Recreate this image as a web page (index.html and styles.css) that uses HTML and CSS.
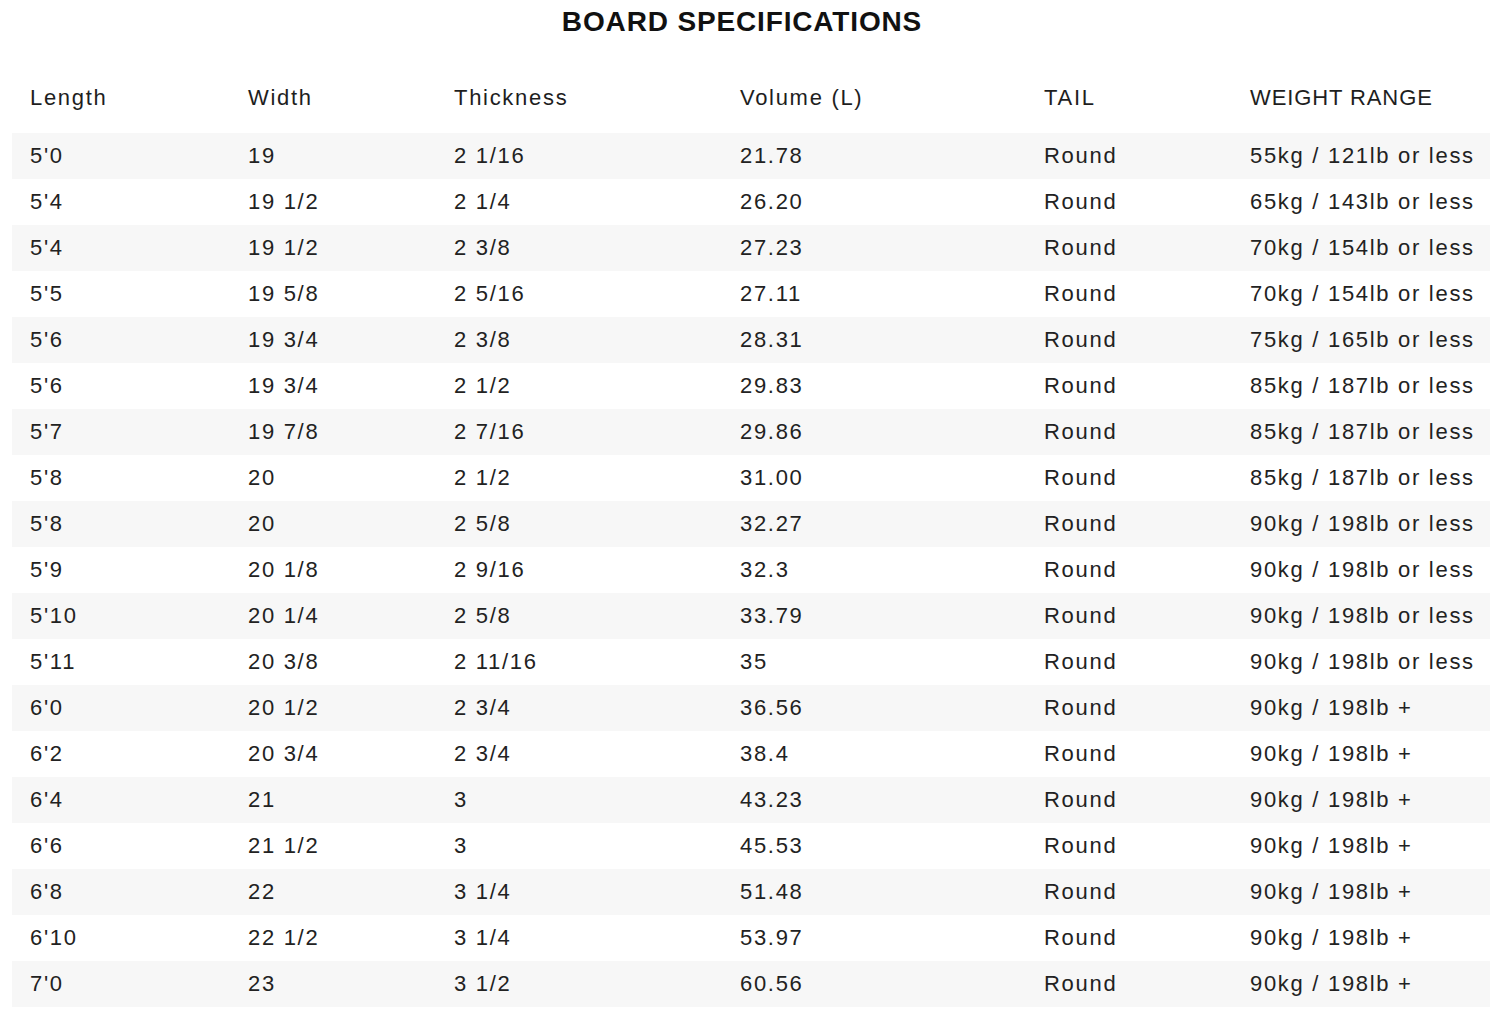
FILE: index.html
```html
<!DOCTYPE html>
<html>
<head>
<meta charset="utf-8">
<link rel="stylesheet" href="styles.css">
</head>
<body>
<div class="page">
  <h1 class="title">BOARD SPECIFICATIONS</h1>
  <table class="specs">
    <colgroup>
      <col class="c1"><col class="c2"><col class="c3"><col class="c4"><col class="c5"><col class="c6">
    </colgroup>
    <thead>
      <tr><th>Length</th><th>Width</th><th>Thickness</th><th>Volume (L)</th><th>TAIL</th><th class="caps">WEIGHT RANGE</th></tr>
    </thead>
    <tbody>
      <tr><td>5'0</td><td>19</td><td>2 1/16</td><td>21.78</td><td>Round</td><td>55kg / 121lb or less</td></tr>
      <tr><td>5'4</td><td>19 1/2</td><td>2 1/4</td><td>26.20</td><td>Round</td><td>65kg / 143lb or less</td></tr>
      <tr><td>5'4</td><td>19 1/2</td><td>2 3/8</td><td>27.23</td><td>Round</td><td>70kg / 154lb or less</td></tr>
      <tr><td>5'5</td><td>19 5/8</td><td>2 5/16</td><td>27.11</td><td>Round</td><td>70kg / 154lb or less</td></tr>
      <tr><td>5'6</td><td>19 3/4</td><td>2 3/8</td><td>28.31</td><td>Round</td><td>75kg / 165lb or less</td></tr>
      <tr><td>5'6</td><td>19 3/4</td><td>2 1/2</td><td>29.83</td><td>Round</td><td>85kg / 187lb or less</td></tr>
      <tr><td>5'7</td><td>19 7/8</td><td>2 7/16</td><td>29.86</td><td>Round</td><td>85kg / 187lb or less</td></tr>
      <tr><td>5'8</td><td>20</td><td>2 1/2</td><td>31.00</td><td>Round</td><td>85kg / 187lb or less</td></tr>
      <tr><td>5'8</td><td>20</td><td>2 5/8</td><td>32.27</td><td>Round</td><td>90kg / 198lb or less</td></tr>
      <tr><td>5'9</td><td>20 1/8</td><td>2 9/16</td><td>32.3</td><td>Round</td><td>90kg / 198lb or less</td></tr>
      <tr><td>5'10</td><td>20 1/4</td><td>2 5/8</td><td>33.79</td><td>Round</td><td>90kg / 198lb or less</td></tr>
      <tr><td>5'11</td><td>20 3/8</td><td>2 11/16</td><td>35</td><td>Round</td><td>90kg / 198lb or less</td></tr>
      <tr><td>6'0</td><td>20 1/2</td><td>2 3/4</td><td>36.56</td><td>Round</td><td>90kg / 198lb +</td></tr>
      <tr><td>6'2</td><td>20 3/4</td><td>2 3/4</td><td>38.4</td><td>Round</td><td>90kg / 198lb +</td></tr>
      <tr><td>6'4</td><td>21</td><td>3</td><td>43.23</td><td>Round</td><td>90kg / 198lb +</td></tr>
      <tr><td>6'6</td><td>21 1/2</td><td>3</td><td>45.53</td><td>Round</td><td>90kg / 198lb +</td></tr>
      <tr><td>6'8</td><td>22</td><td>3 1/4</td><td>51.48</td><td>Round</td><td>90kg / 198lb +</td></tr>
      <tr><td>6'10</td><td>22 1/2</td><td>3 1/4</td><td>53.97</td><td>Round</td><td>90kg / 198lb +</td></tr>
      <tr><td>7'0</td><td>23</td><td>3 1/2</td><td>60.56</td><td>Round</td><td>90kg / 198lb +</td></tr>
    </tbody>
  </table>
</div>
</body>
</html>
```
FILE: styles.css
```css
html, body {
  margin: 0;
  padding: 0;
  background: #ffffff;
}
.page {
  padding: 0 0 0 12px;
  font-family: "Liberation Sans", Arial, sans-serif;
  color: #222;
}
.title {
  margin: 0;
  height: 44px;
  line-height: 44px;
  text-align: center;
  font-size: 28px;
  font-weight: bold;
  letter-spacing: 0.85px;
  color: #111;
  padding-right: 18px;
}
.specs {
  width: 1478px;
  border-collapse: collapse;
  table-layout: fixed;
  margin-top: 31px;
}
.c1 { width: 218px; }
.c2 { width: 206px; }
.c3 { width: 286px; }
.c4 { width: 304px; }
.c5 { width: 206px; }
.c6 { width: 258px; }
.specs th {
  text-align: left;
  font-weight: normal;
  font-size: 22px;
  letter-spacing: 1.7px;
  color: #1e1e1e;
  height: 46px;
  padding: 0 0 12px 18px;
}
.specs th.caps {
  letter-spacing: 0.9px;
}
.specs td {
  font-size: 22px;
  letter-spacing: 1.7px;
  height: 46px;
  padding: 0 0 0 18px;
  white-space: nowrap;
}
.specs tbody tr:nth-child(odd) {
  background: #f7f7f7;
}
```
